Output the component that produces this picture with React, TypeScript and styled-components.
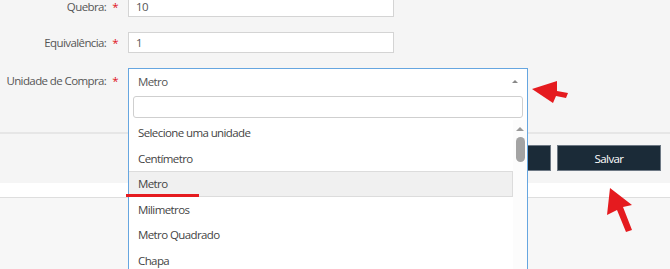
import React, { FC } from 'react';
import styled, { createGlobalStyle } from 'styled-components';

const GlobalStyle = createGlobalStyle`
  html, body {
    margin: 0;
    padding: 0;
    background: #f7f7f7;
    font-family: 'Open Sans', 'Liberation Sans', sans-serif;
    font-size: 11.5px;
    letter-spacing: -0.6px;
    color: #555;
  }
  * { box-sizing: border-box; }
`;

const Page = styled.div`
  position: relative;
  width: 670px;
  height: 269px;
  overflow: hidden;
`;

const FormArea = styled.div`
  display: flex;
  flex-direction: column;
  gap: 15px;
  margin-top: -4px;
  height: 138px;
  background: #f5f5f5;
  border-bottom: 2px solid #e6e6e6;
`;

const Row = styled.div`
  display: grid;
  grid-template-columns: 118px auto;
  column-gap: 10px;
  align-items: center;
`;

const Label = styled.label`
  text-align: right;
  color: #555;
  white-space: nowrap;
`;

const Required = styled.span`
  color: #e0141b;
  margin-left: 6px;
`;

const TextInput = styled.div`
  width: 266px;
  height: 21px;
  padding: 0 7px;
  display: flex;
  align-items: center;
  background: #fff;
  border: 1px solid #d4d4d4;
  color: #555;
`;

const SelectWrap = styled.div`
  position: relative;
  width: 400px;
`;

const SelectHead = styled.div`
  height: 25px;
  padding: 0 9px;
  display: flex;
  align-items: center;
  justify-content: space-between;
  background: #fff;
  border: 1px solid #66a6e0;
  border-bottom: none;
  color: #555;
`;

const Caret = styled.span<{ $size: number; $color: string; $down?: boolean }>`
  width: 0;
  height: 0;
  border-left: ${(p) => p.$size}px solid transparent;
  border-right: ${(p) => p.$size}px solid transparent;
  ${(p) => (p.$down ? 'border-top' : 'border-bottom')}: ${(p) => Math.round(p.$size * 0.9)}px solid ${(p) => p.$color};
`;

const DropPanel = styled.div`
  position: absolute;
  top: 25px;
  left: 0;
  right: 0;
  height: 190px;
  z-index: 5;
  background: #fff;
  border-left: 1px solid #66a6e0;
  border-right: 1px solid #66a6e0;
  display: flex;
  flex-direction: column;
`;

const Search = styled.div`
  margin: 3px 4px 2px;
  height: 22px;
  border: 1px solid #cfcfcf;
  border-radius: 3px;
  flex-shrink: 0;
`;

const ListArea = styled.div`
  display: flex;
  flex: 1;
  min-height: 0;
`;

const Options = styled.ul`
  list-style: none;
  margin: 0;
  padding: 0;
  flex: 1;
`;

const Option = styled.li<{ $active?: boolean }>`
  height: 25.5px;
  padding: 0 9px;
  display: flex;
  align-items: center;
  color: #444;
  background: ${(p) => (p.$active ? '#f0f0f0' : 'transparent')};
  border: 1px solid ${(p) => (p.$active ? '#dcdcdc' : 'transparent')};
  border-left: none;
`;

const ScrollBar = styled.div`
  width: 14px;
  display: flex;
  flex-direction: column;
  align-items: center;
  padding: 7px 0 0;
  background: #fcfcfc;
`;

const Thumb = styled.div`
  width: 9px;
  height: 25px;
  margin-top: 6px;
  border-radius: 5px;
  background: #a3a3a3;
`;

const Spacer = styled.div`
  flex: 1;
`;

const Footer = styled.div`
  display: flex;
  justify-content: flex-end;
  gap: 6px;
  padding: 11px 9px 12px;
  background: #f5f5f5;
`;

const Button = styled.button`
  width: 104px;
  height: 26px;
  background: #1b2b38;
  color: #fff;
  border: 1px solid #6d7884;
  font-family: inherit;
  font-size: inherit;
  letter-spacing: inherit;
  padding: 0;
`;

const WhiteBand = styled.div`
  height: 15px;
  background: #fff;
  border-bottom: 1px solid #dedede;
`;

const Marks = styled.svg`
  position: absolute;
  inset: 0;
  z-index: 10;
  pointer-events: none;
`;

const units = ['Selecione uma unidade', 'Centímetro', 'Metro', 'Milimetros', 'Metro Quadrado', 'Chapa', 'Peça'];

const App: FC = () => (
  <>
    <GlobalStyle />
    <Page>
      <FormArea>
        <Row>
          <Label>
            Quebra:<Required>*</Required>
          </Label>
          <TextInput>10</TextInput>
        </Row>
        <Row>
          <Label>
            Equivalência:<Required>*</Required>
          </Label>
          <TextInput>1</TextInput>
        </Row>
        <Row>
          <Label>
            Unidade de Compra:<Required>*</Required>
          </Label>
          <SelectWrap>
            <SelectHead>
              Metro
              <Caret $size={3} $color="#888" />
            </SelectHead>
            <DropPanel>
              <Search />
              <ListArea>
                <Options>
                  {units.map((u) => (
                    <Option key={u} $active={u === 'Metro'}>
                      {u}
                    </Option>
                  ))}
                </Options>
                <ScrollBar>
                  <Caret $size={4} $color="#999" />
                  <Thumb />
                  <Spacer />
                  <Caret $size={4} $color="#999" $down />
                </ScrollBar>
              </ListArea>
            </DropPanel>
          </SelectWrap>
        </Row>
      </FormArea>
      <Footer>
        <Button>Cancelar</Button>
        <Button>Salvar</Button>
      </Footer>
      <WhiteBand />
      <Marks width="670" height="269" viewBox="0 0 670 269">
        <polygon points="532,89 557,81 557,91 568,93 566,98 556,96 553,103" fill="#e51b1f" />
        <polygon points="610,188 632,205 623,207 632,230 626,232 617,210 607,215" fill="#e51b1f" />
        <rect x="126" y="194" width="73" height="3" fill="#e51b1f" />
      </Marks>
    </Page>
  </>
);

export default App;
